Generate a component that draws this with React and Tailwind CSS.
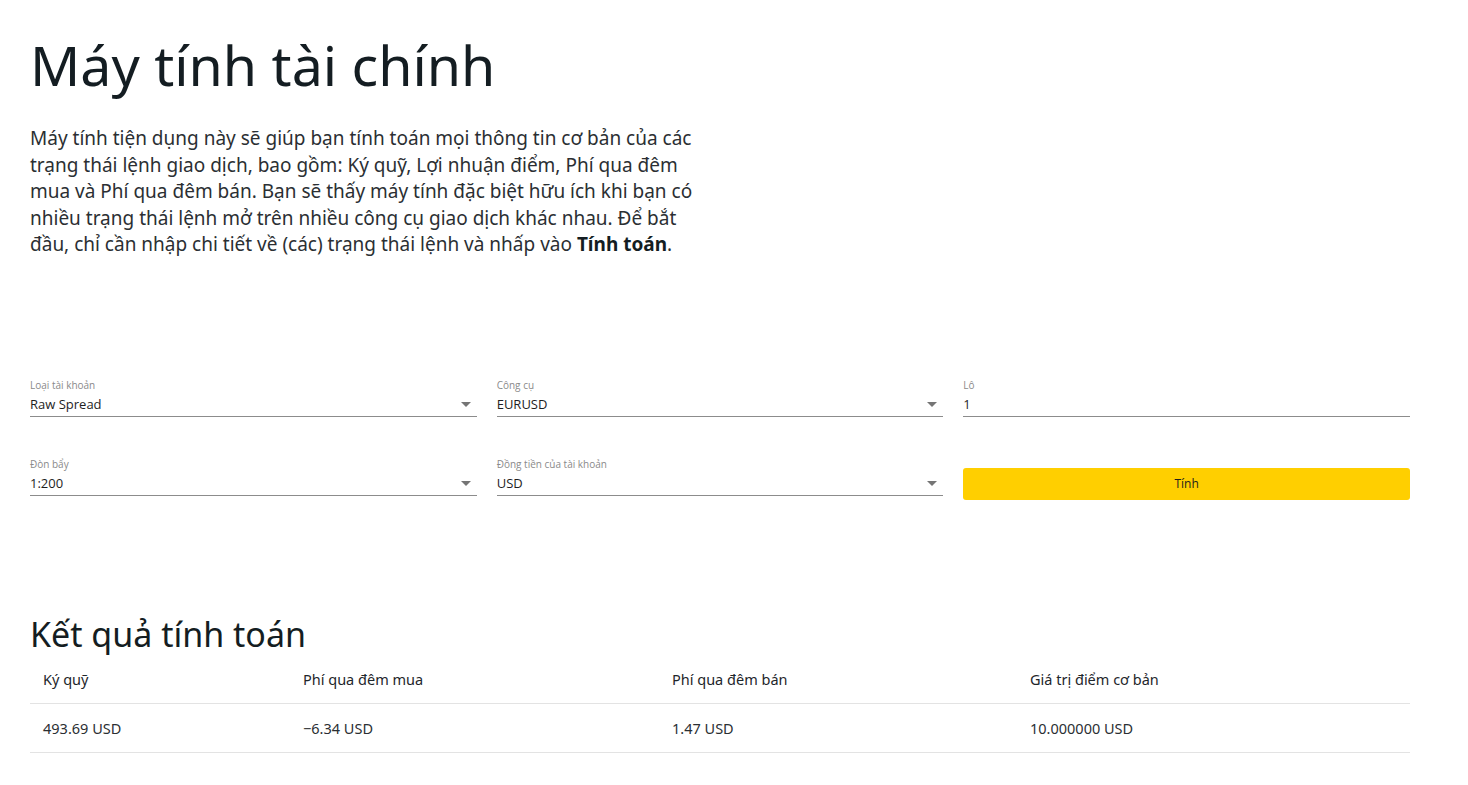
const fields = [
  { label: 'Loại tài khoản', value: 'Raw Spread', select: true },
  { label: 'Công cụ', value: 'EURUSD', select: true },
  { label: 'Lô', value: '1', select: false },
  { label: 'Đòn bẩy', value: '1:200', select: true },
  { label: 'Đồng tiền của tài khoản', value: 'USD', select: true },
];

const results = [
  { head: 'Ký quỹ', value: '493.69 USD' },
  { head: 'Phí qua đêm mua', value: '−6.34 USD' },
  { head: 'Phí qua đêm bán', value: '1.47 USD' },
  { head: 'Giá trị điểm cơ bản', value: '10.000000 USD' },
];

const Field = ({ label, value, select }) => (
  <div className="flex flex-col">
    <span className="text-[10px] leading-[14px] text-[#8a8a8a]">{label}</span>
    <div className="mt-[2px] flex items-center justify-between border-b border-[#8c8c8c] pb-[2px] pr-[6px]">
      <span className="text-[13px] leading-[20px] text-[#1e1e1e]">{value}</span>
      {select && (
        <svg width="10" height="5" viewBox="0 0 10 5" className="mt-[1px]">
          <path d="M0 0h10L5 5z" fill="#757575" />
        </svg>
      )}
    </div>
  </div>
);

const App = () => {
  return (
    <div
      className="min-h-screen bg-white px-[30px] pt-[27px] text-[#141d22]"
      style={{ fontFamily: '"Noto Sans", "Open Sans", sans-serif' }}
    >
      {/* Hero */}
      <h1 className="text-[55.5px] leading-[76px] font-normal">Máy tính tài chính</h1>
      <p className="mt-[22px] whitespace-nowrap text-[19px] leading-[26.5px] text-[#2b2f33]">
        Máy tính tiện dụng này sẽ giúp bạn tính toán mọi thông tin cơ bản của các
        <br />
        trạng thái lệnh giao dịch, bao gồm: Ký quỹ, Lợi nhuận điểm, Phí qua đêm
        <br />
        mua và Phí qua đêm bán. Bạn sẽ thấy máy tính đặc biệt hữu ích khi bạn có
        <br />
        nhiều trạng thái lệnh mở trên nhiều công cụ giao dịch khác nhau. Để bắt
        <br />
        đầu, chỉ cần nhập chi tiết về (các) trạng thái lệnh và nhấp vào{' '}
        <b className="font-bold text-[#141d22]">Tính toán</b>.
      </p>

      {/* Form */}
      <div
        className="mt-[120px] grid w-[1380px] grid-cols-3 gap-x-[20px] gap-y-[40px]"
        style={{ fontFamily: '"Open Sans", "Noto Sans", sans-serif' }}
      >
        {fields.map(f => (
          <Field key={f.label} {...f} />
        ))}
        <div className="flex items-start pt-[11px]">
          <button className="h-[32px] w-full rounded-[3px] bg-[#ffcf00] text-[12px] text-[#1e1e1e]">
            Tính
          </button>
        </div>
      </div>

      {/* Results */}
      <h2 className="mt-[113px] text-[34px] leading-[42px] font-normal">Kết quả tính toán</h2>
      <div className="w-[1380px] text-[14.5px]">
        <div className="grid grid-cols-[260px_369px_358px_393px] border-b border-[#e3e3e3] py-[12px]">
          {results.map(r => (
            <span key={r.head} className="pl-[13px] leading-[24px] text-[#1e262b]">{r.head}</span>
          ))}
        </div>
        <div className="grid grid-cols-[260px_369px_358px_393px] border-b border-[#e3e3e3] py-[12px]">
          {results.map(r => (
            <span key={r.head} className="pl-[13px] leading-[24px] text-[#2b2f33]">{r.value}</span>
          ))}
        </div>
      </div>
    </div>
  );
};

export default App;
